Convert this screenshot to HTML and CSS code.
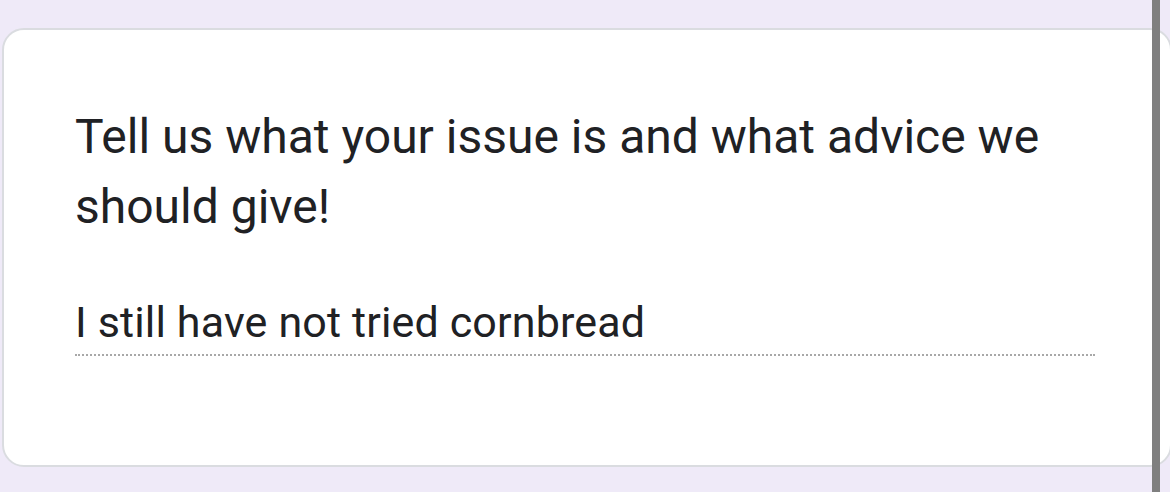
FILE: index.html
```html
<!DOCTYPE html>
<html lang="en">
<head>
    <meta charset="UTF-8">
    <meta name="viewport" content="width=device-width, initial-scale=1.0">
    <title>Form question</title>
    <link rel="stylesheet" href="styles.css">
</head>
<body>
    <div class="page">
        <div class="card">
            <div class="question">Tell us what your issue is and what advice we should give!</div>
            <div class="answer">I still have not tried cornbread</div>
        </div>
    </div>
    <div class="scrollbar"></div>
</body>
</html>
```

FILE: styles.css
```css
body {
    margin: 0;
    background: #efeaf8; /* lavender form background */
    font-family: Roboto, "Noto Sans", sans-serif;
    color: #202124;
    height: 492px;
    overflow: hidden;
}

.page {
    padding: 28px 0 0 2px;
}

.card {
    background: white;
    border: 2px solid #dadce0;
    border-radius: 22px;
    margin-right: -2px;
    height: 439px;
    box-sizing: border-box;
    padding: 72px 71px 0 71px;
}

.question {
    font-size: 48px;
    line-height: 70px;
    width: 1010px;
}

.answer {
    font-size: 43px;
    line-height: 54px;
    letter-spacing: 0.15px;
    margin-top: 53px;
    width: 1020px;
    padding-bottom: 5px;
    border-bottom: 2px dotted #a8a8a8;
}

/* overlay scrollbar on the right */
.scrollbar {
    position: absolute;
    top: 0;
    left: 1152px;
    width: 8px;
    height: 492px;
    background: #7f7f7f;
}
```
